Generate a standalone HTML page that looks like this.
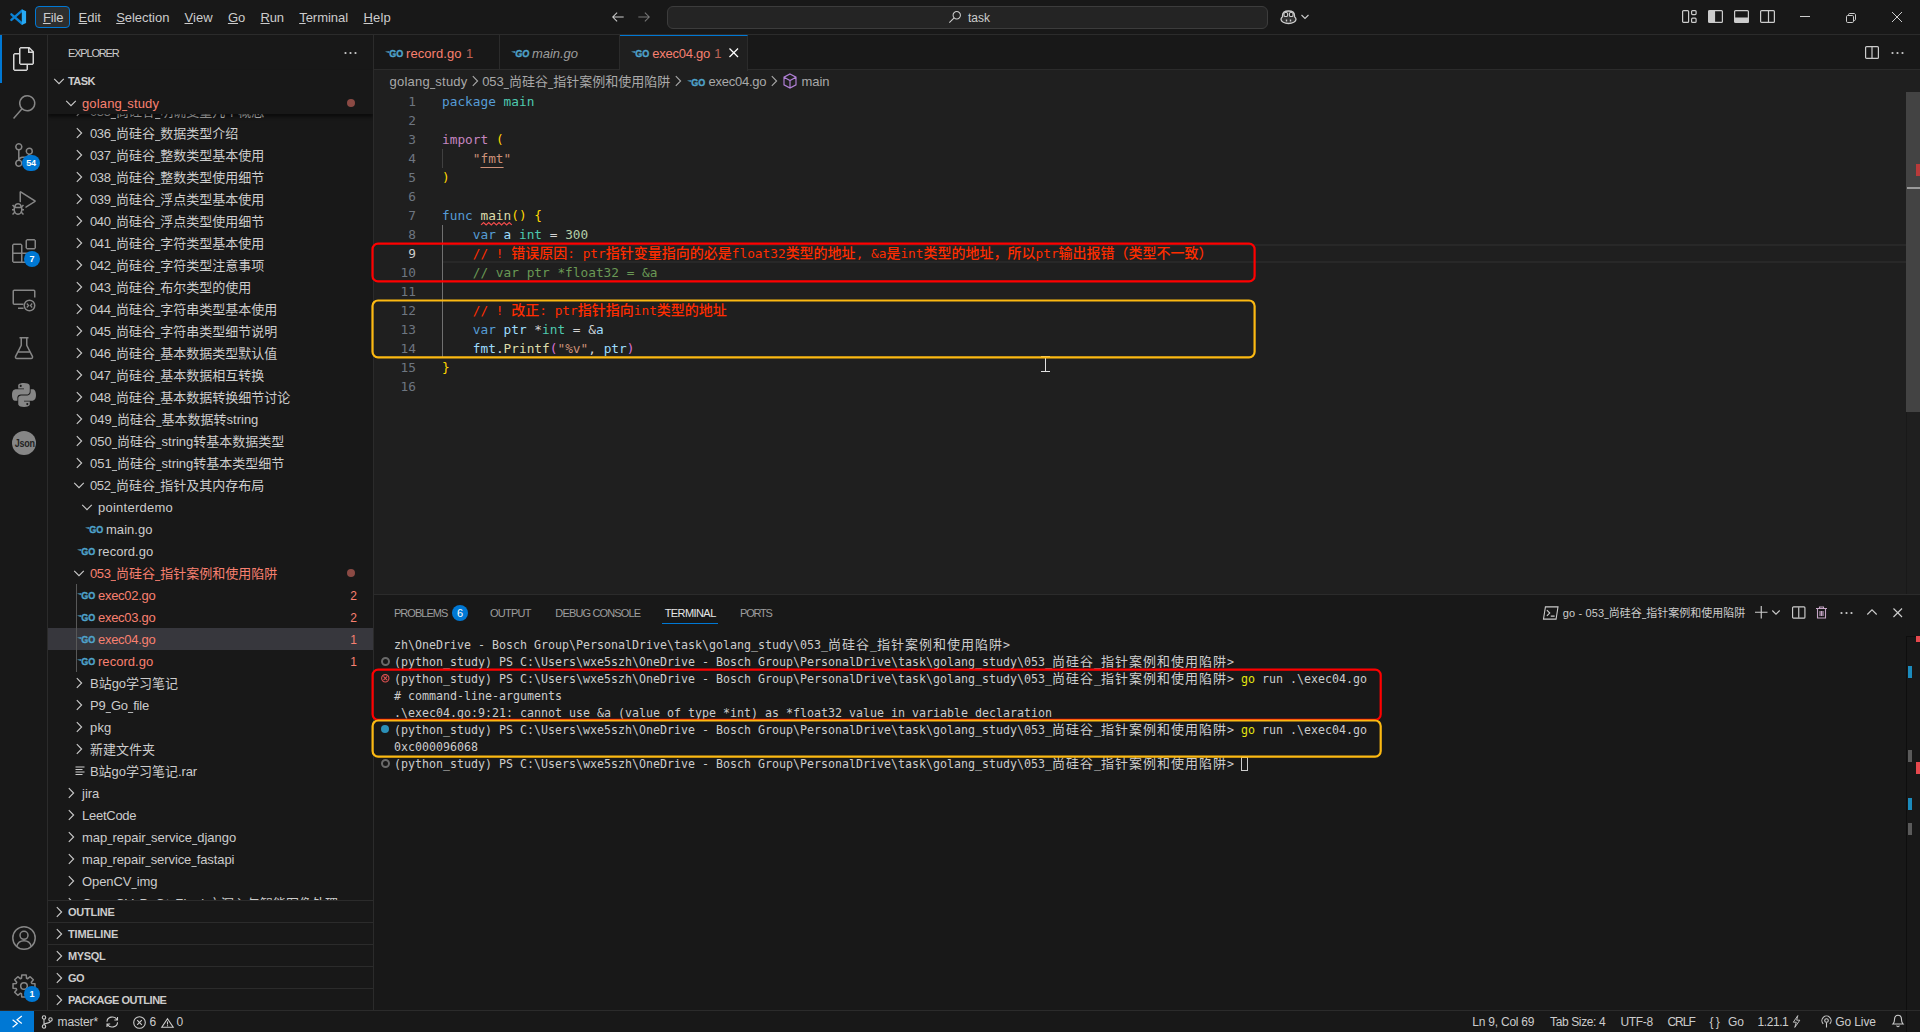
<!DOCTYPE html>
<html lang="zh"><head><meta charset="utf-8"><title>exec04.go - task - Visual Studio Code</title>
<style>
*{box-sizing:border-box;margin:0;padding:0}
html,body{width:1920px;height:1032px;overflow:hidden;background:#181818}
body{font-family:"Liberation Sans","Noto Sans CJK SC",sans-serif;font-size:13px;color:#ccc;position:relative}
.abs{position:absolute}
svg{display:block;overflow:visible;position:absolute}
.cj{font-family:"Noto Sans CJK SC",sans-serif;letter-spacing:0;line-height:0}
.u{display:inline-block;clip-path:inset(0 1.8px 0 0);margin-right:-1.8px;letter-spacing:0}
#title{position:absolute;left:0;top:0;width:1920px;height:35px;background:#181818;border-bottom:1px solid #2b2b2b}
.menu{position:absolute;top:1px;height:34px;line-height:34px;font-size:13px;color:#ccc;white-space:nowrap}
.menu u{text-decoration:underline;text-underline-offset:1px}
#filebtn{position:absolute;left:35px;top:6px;width:35px;height:22px;border:1px solid #0078d4;border-radius:4px;background:#2d2e2e}
#search{position:absolute;left:667px;top:6px;width:601px;height:23px;border:1px solid #3c3c3c;border-radius:6px;background:#242424}
#act{position:absolute;left:0;top:35px;width:48px;height:975px;background:#181818;border-right:1px solid #2b2b2b}
.badge{position:absolute;background:#0078d4;color:#fff;font-size:9px;font-weight:bold;border-radius:8px;height:16px;line-height:16px;text-align:center}
#side{position:absolute;left:48px;top:35px;width:326px;height:975px;background:#181818;border-right:1px solid #2b2b2b;overflow:hidden}
.row{position:absolute;left:0;width:325px;height:22px;line-height:22px;white-space:nowrap;font-size:13px;color:#ccc}
.t{position:absolute;top:0;white-space:nowrap}
.row .t{top:1px}
.row .n{position:absolute;right:16px;top:1px;font-size:12px;line-height:22px}
.red{color:#f88070}
.hdr{position:absolute;left:0;width:325px;height:22px;line-height:22px;font-size:11px;font-weight:bold;color:#ccc;border-top:1px solid #2b2b2b}
.hdr .t{left:20px;top:0}
#ed{position:absolute;left:374px;top:35px;width:1546px;height:559px;background:#1f1f1f}
#tabs{position:absolute;left:0;top:0;width:1546px;height:35px;background:#181818;border-bottom:1px solid #2b2b2b}
.tab{position:absolute;top:0;height:35px;line-height:37px;border-right:1px solid #2b2b2b;font-size:13px;white-space:nowrap}
#bc{position:absolute;left:0;top:35px;width:1546px;height:22px;line-height:24px;font-size:13px;color:#a9a9a9;white-space:nowrap}
.ln{position:absolute;left:0;width:42px;text-align:right;height:19px;line-height:19px;color:#6e7681}
.cl{position:absolute;left:68px;height:19px;line-height:19px;white-space:pre}
.code{font-family:"DejaVu Sans Mono","Liberation Mono","Noto Sans CJK SC",monospace;font-size:12.79px;color:#d4d4d4}
.code .cj{font-size:14px;font-weight:500}
.k{color:#569cd6}.ty{color:#4ec9b0}.s{color:#ce9178}.f{color:#dcdcaa}.v{color:#9cdcfe}.nm{color:#b5cea8}.c{color:#6a9955}.p{color:#c586c0}.b1{color:#ffd700}.b2{color:#da70d6}.al{color:#ff2d00}
#panel{position:absolute;left:374px;top:594px;width:1546px;height:416px;background:#181818;border-top:1px solid #2b2b2b}
.pt{position:absolute;top:7px;height:22px;line-height:22px;font-size:11px;color:#9d9d9d;white-space:nowrap}
.term{font-family:"DejaVu Sans Mono","Liberation Mono","Noto Sans CJK SC",monospace;font-size:11.645px;color:#ccc}
.tl{position:absolute;left:20px;height:17px;line-height:17px;white-space:pre}
.term .cj{font-size:13px;letter-spacing:1px}
.y{color:#e5e510}
#status{position:absolute;left:0;top:1010px;width:1920px;height:22px;background:#181818;border-top:1px solid #2b2b2b;font-size:12px;color:#ccc;line-height:23px;white-space:nowrap}
#remote{position:absolute;left:0;top:0;width:34px;height:21px;background:#0078d4}
.ann{position:absolute;border:2px solid #f00;border-radius:7px}
</style></head><body>
<div id="title">
<svg style="left:9.800px;top:8.800px" width="16.400" height="16.100" viewBox="0 0 16.4 16.1"><path d="M1.400 5.300 12 14.500M1.400 10.900 12 1.700" stroke="#0b82d4" stroke-width="2.350" stroke-linecap="round" fill="none"/><path d="M11.800.2 16.100 2.300v11.700l-4.300 2z" fill="#27a9f3"/></svg>
<div id="filebtn"></div>
<div class="menu" style="left:42.9px;letter-spacing:-0.14px"><u>F</u>ile</div>
<div class="menu" style="left:78.5px;letter-spacing:0.02px"><u>E</u>dit</div>
<div class="menu" style="left:116.2px;letter-spacing:-0.04px"><u>S</u>election</div>
<div class="menu" style="left:184.5px;letter-spacing:0.06px"><u>V</u>iew</div>
<div class="menu" style="left:227.9px;letter-spacing:0.03px"><u>G</u>o</div>
<div class="menu" style="left:260.5px;letter-spacing:-0.22px"><u>R</u>un</div>
<div class="menu" style="left:299.2px;letter-spacing:-0.04px"><u>T</u>erminal</div>
<div class="menu" style="left:363.5px;letter-spacing:0.19px"><u>H</u>elp</div>
<svg style="left:611.0px;top:10.0px" width="14.0" height="14.0" viewBox="0 0 16 16" fill="none" stroke="#ccc" stroke-width="1.2" ><path d="M7 3 2 8l5 5M2 8h12.5"/></svg>
<svg style="left:637.0px;top:10.0px" width="14.0" height="14.0" viewBox="0 0 16 16" fill="none" stroke="#777" stroke-width="1.2" ><path d="M9 3l5 5-5 5M14 8H1.5"/></svg>
<div id="search"></div>
<svg style="left:948.0px;top:10.0px" width="14.0" height="14.0" viewBox="0 0 16 16" fill="none" stroke="#ccc" stroke-width="1.2" ><circle cx="10" cy="6" r="4.2"/><path d="M7 9 1.5 14.5"/></svg>
<div class="menu" style="left:968px;font-size:12px">task</div>
<svg style="left:1280.0px;top:9.0px" width="17.0" height="16.0" viewBox="0 0 17 16" fill="none" stroke="#ccc" stroke-width="1.2" ><path d="M2.500 6.500C2.500 3.500 4.500 2 8.500 2s6 1.500 6 4.500v1.200c.9.600 1.500 1.600 1.500 2.600 0 2.400-3.300 4.200-7.500 4.200S1 12.700 1 10.300c0-1 .600-2 1.500-2.600z" stroke="#ccc" stroke-width="1.3" fill="#ccc" fill-opacity=".15"/><rect x="4" y="3.500" width="3.600" height="4" rx="1.300" fill="#181818" stroke="#ccc" stroke-width="1.100"/><rect x="9.400" y="3.500" width="3.600" height="4" rx="1.300" fill="#181818" stroke="#ccc" stroke-width="1.100"/><path d="M6.500 10.500v2M10.500 10.500v2" stroke-width="1.400"/></svg>
<svg style="left:1301.0px;top:13.0px" width="8.0" height="8.0" viewBox="0 0 8 8" fill="none" stroke="#ccc" stroke-width="1.1" ><path d="M.5 2 4 5.500 7.500 2"/></svg>
<svg style="left:1682.0px;top:10.2px" width="15.0" height="13.0" viewBox="0 0 15 13" fill="none" stroke="#ccc" stroke-width="1.2" ><rect x=".6" y=".6" width="6" height="11.800" rx="1"/><rect x="9.600" y=".6" width="4.500" height="4" rx="1"/><rect x="9.600" y="8.200" width="4.500" height="4.200" rx="1"/></svg>
<svg style="left:1708.0px;top:10.2px" width="15.0" height="13.0" viewBox="0 0 15 13" fill="none" stroke="#ccc" stroke-width="1.2" ><rect x=".6" y=".6" width="13.800" height="11.800" rx="1"/><path d="M1 1h5.500v11H1z" fill="#ccc"/></svg>
<svg style="left:1733.5px;top:10.2px" width="15.0" height="13.0" viewBox="0 0 15 13" fill="none" stroke="#ccc" stroke-width="1.2" ><rect x=".6" y=".6" width="13.800" height="11.800" rx="1"/><path d="M1 8h13v4H1z" fill="#ccc"/></svg>
<svg style="left:1759.5px;top:10.2px" width="15.0" height="13.0" viewBox="0 0 15 13" fill="none" stroke="#ccc" stroke-width="1.2" ><rect x=".6" y=".6" width="13.800" height="11.800" rx="1"/><path d="M8.500 1v11"/></svg>
<svg style="left:1800.0px;top:16.0px" width="10.0" height="1.0" viewBox="0 0 10 1" fill="none" stroke="#ccc" stroke-width="1" ><path d="M0 .5h10"/></svg>
<svg style="left:1846.0px;top:12.5px" width="10.0" height="10.0" viewBox="0 0 10 10" fill="none" stroke="#ccc" stroke-width="1" ><rect x=".5" y="2.500" width="7" height="7" rx="1.200"/><path d="M2.500 2.500V1.700C2.500 1 3 .5 3.700 .5H8c.9 0 1.500.6 1.500 1.500v4.300c0 .7-.5 1.200-1.200 1.200H7.500"/></svg>
<svg style="left:1892.0px;top:12.0px" width="10.0" height="10.0" viewBox="0 0 10 10" fill="none" stroke="#ccc" stroke-width="1" ><path d="M0 0l10 10M10 0 0 10"/></svg>
</div>
<div id="act"><div class="abs" style="left:0;top:0;width:2px;height:48px;background:#0078d4"></div>
<svg style="left:12px;top:12px" width="24" height="24" viewBox="0 0 24 24" fill="#d7d7d7" stroke="none"><path d="M17.500 0h-9L7 1.500V6H2.500L1 7.500v15.070L2.500 24h12.070L16 22.570V18h4.700l1.300-1.430V4.500L17.500 0zm0 2.120l2.380 2.380H17.500V2.120zm-3 20.380h-12v-15H7v9.070L8.500 18h6v4.500zm6-6h-12v-15H16V6h4.500v10.500z"/></svg>
<svg style="left:12px;top:60px" width="24" height="24" viewBox="0 0 24 24" fill="#868686" stroke="none"><path d="M15.250 0a8.250 8.250 0 0 0-6.180 13.720L1 22.880l1.120 1 8.050-9.120A8.251 8.251 0 1 0 15.250.01V0zm0 15a6.750 6.750 0 1 1 0-13.500 6.750 6.750 0 0 1 0 13.500z"/></svg>
<svg style="left:12px;top:108px" width="24" height="24" viewBox="0 0 24 24" fill="#868686" stroke="none"><path d="M21.007 8.222A3.738 3.738 0 0 0 15.045 5.200a3.737 3.737 0 0 0 1.156 6.583 2.988 2.988 0 0 1-2.668 1.670h-2.990a4.456 4.456 0 0 0-2.989 1.165V7.400a3.737 3.737 0 1 0-1.494 0v9.117a3.776 3.776 0 1 0 1.816.099 2.990 2.990 0 0 1 2.668-1.667h2.990a4.484 4.484 0 0 0 4.223-3.039 3.736 3.736 0 0 0 3.250-3.687zM4.565 3.738a2.242 2.242 0 1 1 4.484 0 2.242 2.242 0 0 1-4.484 0zm4.484 16.441a2.242 2.242 0 1 1-4.484 0 2.242 2.242 0 0 1 4.484 0zm8.221-9.715a2.242 2.242 0 1 1 0-4.485 2.242 2.242 0 0 1 0 4.485z"/></svg>
<svg style="left:12px;top:156px" width="24" height="24" viewBox="0 0 24 24" fill="#868686" stroke="none"><path d="M10.940 13.500l-1.320 1.320a3.730 3.730 0 0 0-7.240 0L1.060 13.500 0 14.560l1.720 1.720-.22.220V18H0v1.500h1.500v.080c.077.489.214.966.410 1.420L0 22.940 1.060 24l1.650-1.650A4.308 4.308 0 0 0 6 24a4.310 4.310 0 0 0 3.290-1.650L10.940 24 12 22.940 10.090 21c.198-.464.336-.951.410-1.450v-.100H12V18h-1.500v-1.500l-.22-.22L12 14.560l-1.060-1.060zM6 13.500a2.250 2.250 0 0 1 2.250 2.250h-4.500A2.250 2.250 0 0 1 6 13.500zm3 6a3.330 3.330 0 0 1-3 3 3.330 3.330 0 0 1-3-3v-2.250h6v2.250zm14.760-9.900v1.260L13.500 17.370V15.600l8.500-5.370L9 2v9.460a5.070 5.070 0 0 0-1.500-.720V.630L8.640 0l15.120 9.600z"/></svg>
<svg style="left:12px;top:204px" width="24" height="24" viewBox="0 0 24 24" fill="#868686" stroke="none"><path d="M13.500 1.500L15 0h7.500L24 1.500V9l-1.500 1.500H15L13.500 9V1.500zm1.500 0V9h7.500V1.500H15zM0 15V6l1.500-1.500H9L10.500 6v7.500H18l1.500 1.500v7.500L18 24H1.500L0 22.500V15zm9-1.500V6H1.500v7.500H9zM9 15H1.500v7.500H9V15zm1.500 7.500H18V15h-7.500v7.500z"/></svg>
<svg style="left:12px;top:253px" width="24" height="24" viewBox="0 0 24 24" fill="none" stroke="#868686" stroke-width="1.500"><path d="M11.500 16.250H2.250a1 1 0 0 1-1-1V3.250a1 1 0 0 1 1-1h19.500a1 1 0 0 1 1 1V9.500M6 20.250h5.500"/><circle cx="17.500" cy="17.500" r="5.250"/><path d="M14.800 15.500l1.800 2-1.800 2M20.200 15.500l-1.800 2 1.800 2" stroke-width="1.200"/></svg>
<svg style="left:12px;top:300.700px" width="24" height="24" viewBox="0 0 24 24" fill="none" stroke="#868686" stroke-width="1.500"><path d="M7.500 1.750h9M9.250 1.750v7.500L3.600 20.300a1.500 1.500 0 0 0 1.350 2.200h14.100a1.500 1.500 0 0 0 1.350-2.200L14.750 9.250v-7.500M6 16h12"/></svg>
<svg style="left:12px;top:348px" width="24" height="24" viewBox="0 0 24 24" fill="#868686" stroke="none"><path d="M11.900 0C5.800 0 6.200 2.650 6.200 2.650v2.750h5.800v.8H3.900S0 5.750 0 11.900s3.400 5.950 3.400 5.950h2v-2.850s-.1-3.400 3.350-3.400h5.750s3.250.050 3.250-3.150V3.200S18.250 0 11.900 0zM8.700 1.850a1.050 1.050 0 1 1 0 2.100 1.050 1.050 0 0 1 0-2.100z"/><path d="M12.100 24c6.100 0 5.700-2.650 5.700-2.650v-2.750H12v-.8h8.100s3.900.45 3.900-5.700-3.400-5.950-3.400-5.950h-2v2.850s.1 3.400-3.350 3.400H9.500s-3.250-.050-3.250 3.150v5.250S5.750 24 12.100 24zm3.200-1.850a1.050 1.050 0 1 1 0-2.100 1.050 1.050 0 0 1 0 2.100z"/></svg>
<div class="abs" style="left:12px;top:396px;width:24px;height:24px;border-radius:12px;background:#868686;color:#222;font-size:11.500px;font-weight:bold;line-height:24px;text-align:center;letter-spacing:-.3px"><span style="display:inline-block;transform:scaleX(.78)">Json</span></div>
<svg style="left:12px;top:891px" width="24" height="24" viewBox="0 0 24 24" fill="none" stroke="#868686" stroke-width="1.500"><circle cx="12" cy="12" r="11.200"/><circle cx="12" cy="9.300" r="4"/><path d="M4.800 20.300c.9-3.600 3.800-5.500 7.200-5.500s6.300 1.900 7.200 5.500"/></svg>
<svg style="left:12px;top:939px" width="24" height="24" viewBox="0 0 24 24" fill="none" stroke="#868686" stroke-width="1.500" stroke-linejoin="round"><path d="M9.47 4.20L9.76 1.03L14.24 1.03L14.53 4.20L15.72 4.69L18.18 2.66L21.34 5.82L19.31 8.28L19.80 9.47L22.97 9.76L22.97 14.24L19.80 14.53L19.31 15.72L21.34 18.18L18.18 21.34L15.72 19.31L14.53 19.80L14.24 22.97L9.76 22.97L9.47 19.80L8.28 19.31L5.82 21.34L2.66 18.18L4.69 15.72L4.20 14.53L1.03 14.24L1.03 9.76L4.20 9.47L4.69 8.28L2.66 5.82L5.82 2.66L8.28 4.69Z"/><circle cx="12" cy="12" r="3.300"/></svg>
<div class="badge" style="left:22px;top:120px;width:18px;letter-spacing:-.3px">54</div>
<div class="badge" style="left:24px;top:216px;width:16px">7</div>
<div class="badge" style="left:24px;top:951px;width:16px">1</div>
</div>
<div id="side">
<div class="abs" style="left:0;top:1px;height:35px;line-height:35px;font-size:11px;color:#ccc"><span class="t" style="left:20.0px;"><span style="letter-spacing:-1.18px">EXPLORER</span></span></div>
<svg style="left:296.3px;top:15.9px" width="13.0" height="4.0" viewBox="0 0 13 4" fill="#ccc" stroke="none" stroke-width="1.2" ><circle cx="1.500" cy="2" r="1.100"/><circle cx="6.500" cy="2" r="1.100"/><circle cx="11.500" cy="2" r="1.100"/></svg>
<div class="row " style="top:65px">
<svg style="left:23.0px;top:3.0px" width="16.0" height="16.0" viewBox="0 0 16 16" fill="none" stroke="#ccc" stroke-width="1.1" ><path d="M5.800 3.200 10.600 8 5.800 12.800"/></svg>
<span class="t" style="left:42.0px;"><span style="letter-spacing:-0.39px">035<span class="u" style="clip-path:inset(0 1.84px 0 0);margin-right:-1.84px">_</span></span><span class="cj">尚硅谷</span><span style="letter-spacing:-0.39px"><span class="u" style="clip-path:inset(0 1.84px 0 0);margin-right:-1.84px">_</span></span><span class="cj">明确变量几个概念</span></span>
</div>
<div class="row " style="top:87px">
<svg style="left:23.0px;top:3.0px" width="16.0" height="16.0" viewBox="0 0 16 16" fill="none" stroke="#ccc" stroke-width="1.1" ><path d="M5.800 3.200 10.600 8 5.800 12.800"/></svg>
<span class="t" style="left:42.0px;"><span style="letter-spacing:-0.39px">036<span class="u" style="clip-path:inset(0 1.84px 0 0);margin-right:-1.84px">_</span></span><span class="cj">尚硅谷</span><span style="letter-spacing:-0.39px"><span class="u" style="clip-path:inset(0 1.84px 0 0);margin-right:-1.84px">_</span></span><span class="cj">数据类型介绍</span></span>
</div>
<div class="row " style="top:109px">
<svg style="left:23.0px;top:3.0px" width="16.0" height="16.0" viewBox="0 0 16 16" fill="none" stroke="#ccc" stroke-width="1.1" ><path d="M5.800 3.200 10.600 8 5.800 12.800"/></svg>
<span class="t" style="left:42.0px;"><span style="letter-spacing:-0.39px">037<span class="u" style="clip-path:inset(0 1.84px 0 0);margin-right:-1.84px">_</span></span><span class="cj">尚硅谷</span><span style="letter-spacing:-0.39px"><span class="u" style="clip-path:inset(0 1.84px 0 0);margin-right:-1.84px">_</span></span><span class="cj">整数类型基本使用</span></span>
</div>
<div class="row " style="top:131px">
<svg style="left:23.0px;top:3.0px" width="16.0" height="16.0" viewBox="0 0 16 16" fill="none" stroke="#ccc" stroke-width="1.1" ><path d="M5.800 3.200 10.600 8 5.800 12.800"/></svg>
<span class="t" style="left:42.0px;"><span style="letter-spacing:-0.39px">038<span class="u" style="clip-path:inset(0 1.84px 0 0);margin-right:-1.84px">_</span></span><span class="cj">尚硅谷</span><span style="letter-spacing:-0.39px"><span class="u" style="clip-path:inset(0 1.84px 0 0);margin-right:-1.84px">_</span></span><span class="cj">整数类型使用细节</span></span>
</div>
<div class="row " style="top:153px">
<svg style="left:23.0px;top:3.0px" width="16.0" height="16.0" viewBox="0 0 16 16" fill="none" stroke="#ccc" stroke-width="1.1" ><path d="M5.800 3.200 10.600 8 5.800 12.800"/></svg>
<span class="t" style="left:42.0px;"><span style="letter-spacing:-0.39px">039<span class="u" style="clip-path:inset(0 1.84px 0 0);margin-right:-1.84px">_</span></span><span class="cj">尚硅谷</span><span style="letter-spacing:-0.39px"><span class="u" style="clip-path:inset(0 1.84px 0 0);margin-right:-1.84px">_</span></span><span class="cj">浮点类型基本使用</span></span>
</div>
<div class="row " style="top:175px">
<svg style="left:23.0px;top:3.0px" width="16.0" height="16.0" viewBox="0 0 16 16" fill="none" stroke="#ccc" stroke-width="1.1" ><path d="M5.800 3.200 10.600 8 5.800 12.800"/></svg>
<span class="t" style="left:42.0px;"><span style="letter-spacing:-0.39px">040<span class="u" style="clip-path:inset(0 1.84px 0 0);margin-right:-1.84px">_</span></span><span class="cj">尚硅谷</span><span style="letter-spacing:-0.39px"><span class="u" style="clip-path:inset(0 1.84px 0 0);margin-right:-1.84px">_</span></span><span class="cj">浮点类型使用细节</span></span>
</div>
<div class="row " style="top:197px">
<svg style="left:23.0px;top:3.0px" width="16.0" height="16.0" viewBox="0 0 16 16" fill="none" stroke="#ccc" stroke-width="1.1" ><path d="M5.800 3.200 10.600 8 5.800 12.800"/></svg>
<span class="t" style="left:42.0px;"><span style="letter-spacing:-0.39px">041<span class="u" style="clip-path:inset(0 1.84px 0 0);margin-right:-1.84px">_</span></span><span class="cj">尚硅谷</span><span style="letter-spacing:-0.39px"><span class="u" style="clip-path:inset(0 1.84px 0 0);margin-right:-1.84px">_</span></span><span class="cj">字符类型基本使用</span></span>
</div>
<div class="row " style="top:219px">
<svg style="left:23.0px;top:3.0px" width="16.0" height="16.0" viewBox="0 0 16 16" fill="none" stroke="#ccc" stroke-width="1.1" ><path d="M5.800 3.200 10.600 8 5.800 12.800"/></svg>
<span class="t" style="left:42.0px;"><span style="letter-spacing:-0.39px">042<span class="u" style="clip-path:inset(0 1.84px 0 0);margin-right:-1.84px">_</span></span><span class="cj">尚硅谷</span><span style="letter-spacing:-0.39px"><span class="u" style="clip-path:inset(0 1.84px 0 0);margin-right:-1.84px">_</span></span><span class="cj">字符类型注意事项</span></span>
</div>
<div class="row " style="top:241px">
<svg style="left:23.0px;top:3.0px" width="16.0" height="16.0" viewBox="0 0 16 16" fill="none" stroke="#ccc" stroke-width="1.1" ><path d="M5.800 3.200 10.600 8 5.800 12.800"/></svg>
<span class="t" style="left:42.0px;"><span style="letter-spacing:-0.39px">043<span class="u" style="clip-path:inset(0 1.84px 0 0);margin-right:-1.84px">_</span></span><span class="cj">尚硅谷</span><span style="letter-spacing:-0.39px"><span class="u" style="clip-path:inset(0 1.84px 0 0);margin-right:-1.84px">_</span></span><span class="cj">布尔类型的使用</span></span>
</div>
<div class="row " style="top:263px">
<svg style="left:23.0px;top:3.0px" width="16.0" height="16.0" viewBox="0 0 16 16" fill="none" stroke="#ccc" stroke-width="1.1" ><path d="M5.800 3.200 10.600 8 5.800 12.800"/></svg>
<span class="t" style="left:42.0px;"><span style="letter-spacing:-0.39px">044<span class="u" style="clip-path:inset(0 1.84px 0 0);margin-right:-1.84px">_</span></span><span class="cj">尚硅谷</span><span style="letter-spacing:-0.39px"><span class="u" style="clip-path:inset(0 1.84px 0 0);margin-right:-1.84px">_</span></span><span class="cj">字符串类型基本使用</span></span>
</div>
<div class="row " style="top:285px">
<svg style="left:23.0px;top:3.0px" width="16.0" height="16.0" viewBox="0 0 16 16" fill="none" stroke="#ccc" stroke-width="1.1" ><path d="M5.800 3.200 10.600 8 5.800 12.800"/></svg>
<span class="t" style="left:42.0px;"><span style="letter-spacing:-0.39px">045<span class="u" style="clip-path:inset(0 1.84px 0 0);margin-right:-1.84px">_</span></span><span class="cj">尚硅谷</span><span style="letter-spacing:-0.39px"><span class="u" style="clip-path:inset(0 1.84px 0 0);margin-right:-1.84px">_</span></span><span class="cj">字符串类型细节说明</span></span>
</div>
<div class="row " style="top:307px">
<svg style="left:23.0px;top:3.0px" width="16.0" height="16.0" viewBox="0 0 16 16" fill="none" stroke="#ccc" stroke-width="1.1" ><path d="M5.800 3.200 10.600 8 5.800 12.800"/></svg>
<span class="t" style="left:42.0px;"><span style="letter-spacing:-0.39px">046<span class="u" style="clip-path:inset(0 1.84px 0 0);margin-right:-1.84px">_</span></span><span class="cj">尚硅谷</span><span style="letter-spacing:-0.39px"><span class="u" style="clip-path:inset(0 1.84px 0 0);margin-right:-1.84px">_</span></span><span class="cj">基本数据类型默认值</span></span>
</div>
<div class="row " style="top:329px">
<svg style="left:23.0px;top:3.0px" width="16.0" height="16.0" viewBox="0 0 16 16" fill="none" stroke="#ccc" stroke-width="1.1" ><path d="M5.800 3.200 10.600 8 5.800 12.800"/></svg>
<span class="t" style="left:42.0px;"><span style="letter-spacing:-0.39px">047<span class="u" style="clip-path:inset(0 1.84px 0 0);margin-right:-1.84px">_</span></span><span class="cj">尚硅谷</span><span style="letter-spacing:-0.39px"><span class="u" style="clip-path:inset(0 1.84px 0 0);margin-right:-1.84px">_</span></span><span class="cj">基本数据相互转换</span></span>
</div>
<div class="row " style="top:351px">
<svg style="left:23.0px;top:3.0px" width="16.0" height="16.0" viewBox="0 0 16 16" fill="none" stroke="#ccc" stroke-width="1.1" ><path d="M5.800 3.200 10.600 8 5.800 12.800"/></svg>
<span class="t" style="left:42.0px;"><span style="letter-spacing:-0.39px">048<span class="u" style="clip-path:inset(0 1.84px 0 0);margin-right:-1.84px">_</span></span><span class="cj">尚硅谷</span><span style="letter-spacing:-0.39px"><span class="u" style="clip-path:inset(0 1.84px 0 0);margin-right:-1.84px">_</span></span><span class="cj">基本数据转换细节讨论</span></span>
</div>
<div class="row " style="top:373px">
<svg style="left:23.0px;top:3.0px" width="16.0" height="16.0" viewBox="0 0 16 16" fill="none" stroke="#ccc" stroke-width="1.1" ><path d="M5.800 3.200 10.600 8 5.800 12.800"/></svg>
<span class="t" style="left:42.0px;">049<span class="u" style="clip-path:inset(0 1.84px 0 0);margin-right:-1.84px">_</span><span class="cj">尚硅谷</span><span class="u" style="clip-path:inset(0 1.84px 0 0);margin-right:-1.84px">_</span><span class="cj">基本数据转</span>string</span>
</div>
<div class="row " style="top:395px">
<svg style="left:23.0px;top:3.0px" width="16.0" height="16.0" viewBox="0 0 16 16" fill="none" stroke="#ccc" stroke-width="1.1" ><path d="M5.800 3.200 10.600 8 5.800 12.800"/></svg>
<span class="t" style="left:42.0px;">050<span class="u" style="clip-path:inset(0 1.84px 0 0);margin-right:-1.84px">_</span><span class="cj">尚硅谷</span><span class="u" style="clip-path:inset(0 1.84px 0 0);margin-right:-1.84px">_</span>string<span class="cj">转基本数据类型</span></span>
</div>
<div class="row " style="top:417px">
<svg style="left:23.0px;top:3.0px" width="16.0" height="16.0" viewBox="0 0 16 16" fill="none" stroke="#ccc" stroke-width="1.1" ><path d="M5.800 3.200 10.600 8 5.800 12.800"/></svg>
<span class="t" style="left:42.0px;">051<span class="u" style="clip-path:inset(0 1.84px 0 0);margin-right:-1.84px">_</span><span class="cj">尚硅谷</span><span class="u" style="clip-path:inset(0 1.84px 0 0);margin-right:-1.84px">_</span>string<span class="cj">转基本类型细节</span></span>
</div>
<div class="row " style="top:439px">
<svg style="left:23.0px;top:3.0px" width="16.0" height="16.0" viewBox="0 0 16 16" fill="none" stroke="#ccc" stroke-width="1.1" ><path d="M3.200 5.800 8 10.600 12.800 5.800"/></svg>
<span class="t" style="left:42.0px;"><span style="letter-spacing:-0.39px">052<span class="u" style="clip-path:inset(0 1.84px 0 0);margin-right:-1.84px">_</span></span><span class="cj">尚硅谷</span><span style="letter-spacing:-0.39px"><span class="u" style="clip-path:inset(0 1.84px 0 0);margin-right:-1.84px">_</span></span><span class="cj">指针及其内存布局</span></span>
</div>
<div class="row " style="top:461px">
<svg style="left:31.0px;top:3.0px" width="16.0" height="16.0" viewBox="0 0 16 16" fill="none" stroke="#ccc" stroke-width="1.1" ><path d="M3.200 5.800 8 10.600 12.800 5.800"/></svg>
<span class="t" style="left:50.0px;"><span style="letter-spacing:0.25px">pointerdemo</span></span>
</div>
<div class="row " style="top:483px">
<svg style="left:37.0px;top:6.0px" width="18" height="10" viewBox="0 0 18 10"><path d="M0 3.500 4.400 3.100V5.200L2 4.500z" fill="#4f9fc4" opacity=".85"/><text transform="translate(4.200 8.600) scale(.25)" font-family="Liberation Sans,sans-serif" font-weight="bold" font-size="40" text-rendering="geometricPrecision" fill="#4fa3cb" stroke="#4fa3cb" stroke-width="1.600" textLength="56" lengthAdjust="spacingAndGlyphs">GO</text></svg>
<span class="t" style="left:58.0px;"><span style="letter-spacing:0.04px">main.go</span></span>
</div>
<div class="row " style="top:505px">
<svg style="left:29.0px;top:6.0px" width="18" height="10" viewBox="0 0 18 10"><path d="M0 3.500 4.400 3.100V5.200L2 4.500z" fill="#4f9fc4" opacity=".85"/><text transform="translate(4.200 8.600) scale(.25)" font-family="Liberation Sans,sans-serif" font-weight="bold" font-size="40" text-rendering="geometricPrecision" fill="#4fa3cb" stroke="#4fa3cb" stroke-width="1.600" textLength="56" lengthAdjust="spacingAndGlyphs">GO</text></svg>
<span class="t" style="left:50.0px;"><span style="letter-spacing:0.04px">record.go</span></span>
</div>
<div class="row red" style="top:527px">
<svg style="left:23.0px;top:3.0px" width="16.0" height="16.0" viewBox="0 0 16 16" fill="none" stroke="#ccc" stroke-width="1.1" ><path d="M3.200 5.800 8 10.600 12.800 5.800"/></svg>
<span class="t" style="left:42.0px;"><span style="letter-spacing:-0.39px">053<span class="u" style="clip-path:inset(0 1.84px 0 0);margin-right:-1.84px">_</span></span><span class="cj">尚硅谷</span><span style="letter-spacing:-0.39px"><span class="u" style="clip-path:inset(0 1.84px 0 0);margin-right:-1.84px">_</span></span><span class="cj">指针案例和使用陷阱</span></span>
<span class="abs" style="left:299px;top:7px;width:8px;height:8px;border-radius:4px;background:#8b4a44"></span>
</div>
<div class="row red" style="top:549px">
<svg style="left:29.0px;top:6.0px" width="18" height="10" viewBox="0 0 18 10"><path d="M0 3.500 4.400 3.100V5.200L2 4.500z" fill="#4f9fc4" opacity=".85"/><text transform="translate(4.200 8.600) scale(.25)" font-family="Liberation Sans,sans-serif" font-weight="bold" font-size="40" text-rendering="geometricPrecision" fill="#4fa3cb" stroke="#4fa3cb" stroke-width="1.600" textLength="56" lengthAdjust="spacingAndGlyphs">GO</text></svg>
<span class="t" style="left:50.0px;"><span style="letter-spacing:-0.28px">exec02.go</span></span>
<span class="n">2</span>
</div>
<div class="row red" style="top:571px">
<svg style="left:29.0px;top:6.0px" width="18" height="10" viewBox="0 0 18 10"><path d="M0 3.500 4.400 3.100V5.200L2 4.500z" fill="#4f9fc4" opacity=".85"/><text transform="translate(4.200 8.600) scale(.25)" font-family="Liberation Sans,sans-serif" font-weight="bold" font-size="40" text-rendering="geometricPrecision" fill="#4fa3cb" stroke="#4fa3cb" stroke-width="1.600" textLength="56" lengthAdjust="spacingAndGlyphs">GO</text></svg>
<span class="t" style="left:50.0px;"><span style="letter-spacing:-0.28px">exec03.go</span></span>
<span class="n">2</span>
</div>
<div class="row red" style="top:593px;background:#37373d">
<svg style="left:29.0px;top:6.0px" width="18" height="10" viewBox="0 0 18 10"><path d="M0 3.500 4.400 3.100V5.200L2 4.500z" fill="#4f9fc4" opacity=".85"/><text transform="translate(4.200 8.600) scale(.25)" font-family="Liberation Sans,sans-serif" font-weight="bold" font-size="40" text-rendering="geometricPrecision" fill="#4fa3cb" stroke="#4fa3cb" stroke-width="1.600" textLength="56" lengthAdjust="spacingAndGlyphs">GO</text></svg>
<span class="t" style="left:50.0px;"><span style="letter-spacing:-0.28px">exec04.go</span></span>
<span class="n">1</span>
</div>
<div class="row red" style="top:615px">
<svg style="left:29.0px;top:6.0px" width="18" height="10" viewBox="0 0 18 10"><path d="M0 3.500 4.400 3.100V5.200L2 4.500z" fill="#4f9fc4" opacity=".85"/><text transform="translate(4.200 8.600) scale(.25)" font-family="Liberation Sans,sans-serif" font-weight="bold" font-size="40" text-rendering="geometricPrecision" fill="#4fa3cb" stroke="#4fa3cb" stroke-width="1.600" textLength="56" lengthAdjust="spacingAndGlyphs">GO</text></svg>
<span class="t" style="left:50.0px;"><span style="letter-spacing:0.04px">record.go</span></span>
<span class="n">1</span>
</div>
<div class="row " style="top:637px">
<svg style="left:23.0px;top:3.0px" width="16.0" height="16.0" viewBox="0 0 16 16" fill="none" stroke="#ccc" stroke-width="1.1" ><path d="M5.800 3.200 10.600 8 5.800 12.800"/></svg>
<span class="t" style="left:42.0px;"><span style="letter-spacing:-0.04px">B</span><span class="cj">站</span><span style="letter-spacing:-0.04px">go</span><span class="cj">学习笔记</span></span>
</div>
<div class="row " style="top:659px">
<svg style="left:23.0px;top:3.0px" width="16.0" height="16.0" viewBox="0 0 16 16" fill="none" stroke="#ccc" stroke-width="1.1" ><path d="M5.800 3.200 10.600 8 5.800 12.800"/></svg>
<span class="t" style="left:42.0px;"><span style="letter-spacing:-0.21px">P9<span class="u" style="clip-path:inset(0 1.84px 0 0);margin-right:-1.84px">_</span>Go<span class="u" style="clip-path:inset(0 1.84px 0 0);margin-right:-1.84px">_</span>file</span></span>
</div>
<div class="row " style="top:681px">
<svg style="left:23.0px;top:3.0px" width="16.0" height="16.0" viewBox="0 0 16 16" fill="none" stroke="#ccc" stroke-width="1.1" ><path d="M5.800 3.200 10.600 8 5.800 12.800"/></svg>
<span class="t" style="left:42.0px;"><span style="letter-spacing:0.18px">pkg</span></span>
</div>
<div class="row " style="top:703px">
<svg style="left:23.0px;top:3.0px" width="16.0" height="16.0" viewBox="0 0 16 16" fill="none" stroke="#ccc" stroke-width="1.1" ><path d="M5.800 3.200 10.600 8 5.800 12.800"/></svg>
<span class="t" style="left:42.0px;"><span class="cj">新建文件夹</span></span>
</div>
<div class="row " style="top:725px">
<svg style="left:27.0px;top:5.0px" width="12.0" height="12.0" viewBox="0 0 12 12" fill="none" stroke="#ccc" stroke-width="1.1" ><path d="M.5 2h9M.5 4.500h7M.5 7h9M.5 9.500h7"/></svg>
<span class="t" style="left:42.0px;"><span style="letter-spacing:-0.09px">B</span><span class="cj">站</span><span style="letter-spacing:-0.09px">go</span><span class="cj">学习笔记</span><span style="letter-spacing:-0.09px">.rar</span></span>
</div>
<div class="row " style="top:747px">
<svg style="left:15.0px;top:3.0px" width="16.0" height="16.0" viewBox="0 0 16 16" fill="none" stroke="#ccc" stroke-width="1.1" ><path d="M5.800 3.200 10.600 8 5.800 12.800"/></svg>
<span class="t" style="left:34.0px;"><span style="letter-spacing:-0.01px">jira</span></span>
</div>
<div class="row " style="top:769px">
<svg style="left:15.0px;top:3.0px" width="16.0" height="16.0" viewBox="0 0 16 16" fill="none" stroke="#ccc" stroke-width="1.1" ><path d="M5.800 3.200 10.600 8 5.800 12.800"/></svg>
<span class="t" style="left:34.0px;"><span style="letter-spacing:-0.26px">LeetCode</span></span>
</div>
<div class="row " style="top:791px">
<svg style="left:15.0px;top:3.0px" width="16.0" height="16.0" viewBox="0 0 16 16" fill="none" stroke="#ccc" stroke-width="1.1" ><path d="M5.800 3.200 10.600 8 5.800 12.800"/></svg>
<span class="t" style="left:34.0px;"><span style="letter-spacing:-0.04px">map<span class="u" style="clip-path:inset(0 1.84px 0 0);margin-right:-1.84px">_</span>repair<span class="u" style="clip-path:inset(0 1.84px 0 0);margin-right:-1.84px">_</span>service<span class="u" style="clip-path:inset(0 1.84px 0 0);margin-right:-1.84px">_</span>django</span></span>
</div>
<div class="row " style="top:813px">
<svg style="left:15.0px;top:3.0px" width="16.0" height="16.0" viewBox="0 0 16 16" fill="none" stroke="#ccc" stroke-width="1.1" ><path d="M5.800 3.200 10.600 8 5.800 12.800"/></svg>
<span class="t" style="left:34.0px;"><span style="letter-spacing:-0.08px">map<span class="u" style="clip-path:inset(0 1.84px 0 0);margin-right:-1.84px">_</span>repair<span class="u" style="clip-path:inset(0 1.84px 0 0);margin-right:-1.84px">_</span>service<span class="u" style="clip-path:inset(0 1.84px 0 0);margin-right:-1.84px">_</span>fastapi</span></span>
</div>
<div class="row " style="top:835px">
<svg style="left:15.0px;top:3.0px" width="16.0" height="16.0" viewBox="0 0 16 16" fill="none" stroke="#ccc" stroke-width="1.1" ><path d="M5.800 3.200 10.600 8 5.800 12.800"/></svg>
<span class="t" style="left:34.0px;"><span style="letter-spacing:-0.10px">OpenCV<span class="u" style="clip-path:inset(0 1.84px 0 0);margin-right:-1.84px">_</span>img</span></span>
</div>
<div class="row " style="top:857px">
<svg style="left:15.0px;top:3.0px" width="16.0" height="16.0" viewBox="0 0 16 16" fill="none" stroke="#ccc" stroke-width="1.1" ><path d="M5.800 3.200 10.600 8 5.800 12.800"/></svg>
<span class="t" style="left:34.0px;"><span style="letter-spacing:0.36px">OpenCV<span class="u" style="clip-path:inset(0 1.84px 0 0);margin-right:-1.84px">_</span>PyQt<span class="u" style="clip-path:inset(0 1.84px 0 0);margin-right:-1.84px">_</span>Flask</span><span class="cj">之深入与智能图像处理</span></span>
</div>
<div class="abs" style="left:28px;top:549px;width:1px;height:88px;background:#585858"></div>
<div class="abs" style="left:0;top:35px;width:325px;height:44px;background:#181818;box-shadow:0 3px 3px rgba(0,0,0,.5)"></div>
<div class="row" style="top:34px;font-size:11px;font-weight:bold"><svg style="left:3.0px;top:4.0px" width="16.0" height="16.0" viewBox="0 0 16 16" fill="none" stroke="#ccc" stroke-width="1.1" ><path d="M3.200 5.800 8 10.600 12.800 5.800"/></svg><span class="t" style="left:20.0px;"><span style="letter-spacing:-0.53px">TASK</span></span></div>
<div class="row red" style="top:57px"><svg style="left:15.0px;top:3.0px" width="16.0" height="16.0" viewBox="0 0 16 16" fill="none" stroke="#ccc" stroke-width="1.1" ><path d="M3.200 5.800 8 10.600 12.800 5.800"/></svg><span class="t" style="left:34.0px;"><span style="letter-spacing:0.14px">golang<span class="u" style="clip-path:inset(0 1.84px 0 0);margin-right:-1.84px">_</span>study</span></span><span class="abs" style="left:299px;top:7px;width:8px;height:8px;border-radius:4px;background:#8b4a44"></span></div>
<div class="abs" style="left:0;top:865px;width:325px;height:110px;background:#181818"></div>
<div class="hdr" style="top:865px"><svg style="left:3.0px;top:2.6px" width="16.0" height="16.0" viewBox="0 0 16 16" fill="none" stroke="#ccc" stroke-width="1.1" ><path d="M5.800 3.200 10.600 8 5.800 12.800"/></svg><span class="t" style="left:20.0px;"><span style="letter-spacing:-0.25px">OUTLINE</span></span></div>
<div class="hdr" style="top:887px"><svg style="left:3.0px;top:2.6px" width="16.0" height="16.0" viewBox="0 0 16 16" fill="none" stroke="#ccc" stroke-width="1.1" ><path d="M5.800 3.200 10.600 8 5.800 12.800"/></svg><span class="t" style="left:20.0px;"><span style="letter-spacing:-0.13px">TIMELINE</span></span></div>
<div class="hdr" style="top:909px"><svg style="left:3.0px;top:2.6px" width="16.0" height="16.0" viewBox="0 0 16 16" fill="none" stroke="#ccc" stroke-width="1.1" ><path d="M5.800 3.200 10.600 8 5.800 12.800"/></svg><span class="t" style="left:20.0px;"><span style="letter-spacing:-0.36px">MYSQL</span></span></div>
<div class="hdr" style="top:931px"><svg style="left:3.0px;top:2.6px" width="16.0" height="16.0" viewBox="0 0 16 16" fill="none" stroke="#ccc" stroke-width="1.1" ><path d="M5.800 3.200 10.600 8 5.800 12.800"/></svg><span class="t" style="left:20.0px;"><span style="letter-spacing:-0.56px">GO</span></span></div>
<div class="hdr" style="top:953px"><svg style="left:3.0px;top:2.6px" width="16.0" height="16.0" viewBox="0 0 16 16" fill="none" stroke="#ccc" stroke-width="1.1" ><path d="M5.800 3.200 10.600 8 5.800 12.800"/></svg><span class="t" style="left:20.0px;"><span style="letter-spacing:-0.47px">PACKAGE OUTLINE</span></span></div>
</div>
<div id="ed">
<div id="tabs">
<div class="tab red" style="left:0;width:126px"><svg style="left:10.5px;top:12.7px" width="18" height="10" viewBox="0 0 18 10"><path d="M0 3.500 4.400 3.100V5.200L2 4.500z" fill="#4f9fc4" opacity=".85"/><text transform="translate(4.200 8.600) scale(.25)" font-family="Liberation Sans,sans-serif" font-weight="bold" font-size="40" text-rendering="geometricPrecision" fill="#4fa3cb" stroke="#4fa3cb" stroke-width="1.600" textLength="56" lengthAdjust="spacingAndGlyphs">GO</text></svg><span class="t" style="left:32.0px;"><span style="letter-spacing:0.06px">record.go</span></span><span class="t" style="left:92.0px;opacity:.72">1</span></div>
<div class="tab" style="left:126px;width:120px;color:#9d9d9d;font-style:italic"><svg style="left:10.5px;top:12.7px" width="18" height="10" viewBox="0 0 18 10"><path d="M0 3.500 4.400 3.100V5.200L2 4.500z" fill="#4f9fc4" opacity=".85"/><text transform="translate(4.200 8.600) scale(.25)" font-family="Liberation Sans,sans-serif" font-weight="bold" font-size="40" text-rendering="geometricPrecision" fill="#4fa3cb" stroke="#4fa3cb" stroke-width="1.600" textLength="56" lengthAdjust="spacingAndGlyphs">GO</text></svg><span class="t" style="left:32.0px;"><span style="letter-spacing:-0.04px">main.go</span></span></div>
<div class="tab red" style="left:246px;width:128px;background:#1f1f1f;height:36px;border-top:1px solid #0078d4;line-height:35px"><svg style="left:10.5px;top:11.7px" width="18" height="10" viewBox="0 0 18 10"><path d="M0 3.500 4.400 3.100V5.200L2 4.500z" fill="#4f9fc4" opacity=".85"/><text transform="translate(4.200 8.600) scale(.25)" font-family="Liberation Sans,sans-serif" font-weight="bold" font-size="40" text-rendering="geometricPrecision" fill="#4fa3cb" stroke="#4fa3cb" stroke-width="1.600" textLength="56" lengthAdjust="spacingAndGlyphs">GO</text></svg><span class="t" style="left:32.2px;"><span style="letter-spacing:-0.24px">exec04.go</span></span><span class="t" style="left:94.2px;opacity:.72">1</span><svg style="left:109.0px;top:12.0px" width="9.5" height="9.5" viewBox="0 0 10 10" fill="none" stroke="#fff" stroke-width="1.3" ><path d="M.5.5l9 9M9.500.5l-9 9"/></svg></div>
<svg style="left:1490.5px;top:11.0px" width="14.0" height="13.0" viewBox="0 0 14 13" fill="none" stroke="#ccc" stroke-width="1.2" ><rect x=".6" y=".6" width="12.800" height="11.800" rx="1"/><path d="M7 1v11"/></svg>
<svg style="left:1516.5px;top:16.0px" width="13.0" height="4.0" viewBox="0 0 13 4" fill="#ccc" stroke="none" stroke-width="1.2" ><circle cx="1.500" cy="2" r="1.100"/><circle cx="6.500" cy="2" r="1.100"/><circle cx="11.500" cy="2" r="1.100"/></svg>
</div>
<div id="bc"><span class="t" style="left:15.5px;"><span style="letter-spacing:0.23px">golang<span class="u" style="clip-path:inset(0 1.84px 0 0);margin-right:-1.84px">_</span>study</span></span><svg style="left:92.5px;top:3.0px" width="16.0" height="16.0" viewBox="0 0 16 16" fill="none" stroke="#a9a9a9" stroke-width="1.1" ><path d="M5.800 3.200 10.600 8 5.800 12.800"/></svg><span class="t" style="left:108.2px;"><span style="letter-spacing:-0.13px">053<span class="u" style="clip-path:inset(0 1.84px 0 0);margin-right:-1.84px">_</span></span><span class="cj">尚硅谷</span><span style="letter-spacing:-0.13px"><span class="u" style="clip-path:inset(0 1.84px 0 0);margin-right:-1.84px">_</span></span><span class="cj">指针案例和使用陷阱</span></span><svg style="left:296.0px;top:3.0px" width="16.0" height="16.0" viewBox="0 0 16 16" fill="none" stroke="#a9a9a9" stroke-width="1.1" ><path d="M5.800 3.200 10.600 8 5.800 12.800"/></svg><svg style="left:313.0px;top:7.0px" width="18" height="10" viewBox="0 0 18 10"><path d="M0 3.500 4.400 3.100V5.200L2 4.500z" fill="#4f9fc4" opacity=".85"/><text transform="translate(4.200 8.600) scale(.25)" font-family="Liberation Sans,sans-serif" font-weight="bold" font-size="40" text-rendering="geometricPrecision" fill="#4fa3cb" stroke="#4fa3cb" stroke-width="1.600" textLength="56" lengthAdjust="spacingAndGlyphs">GO</text></svg><span class="t" style="left:334.5px;"><span style="letter-spacing:-0.24px">exec04.go</span></span><svg style="left:392.0px;top:3.0px" width="16.0" height="16.0" viewBox="0 0 16 16" fill="none" stroke="#a9a9a9" stroke-width="1.1" ><path d="M5.800 3.200 10.600 8 5.800 12.800"/></svg>
<svg style="left:409.3px;top:2.8px" width="14.0" height="16.0" viewBox="0 0 14 16" fill="none" stroke="#b180d7" stroke-width="1.15" ><path d="M7 1 13 4.200v7.600L7 15 1 11.800V4.200zM1 4.200 7 7.600l6-3.400M7 7.600V15"/></svg>
<span class="t" style="left:427.5px;"><span style="letter-spacing:-0.04px">main</span></span></div>
<div class="code abs" style="left:0;top:57px;width:1546px;height:502px">
<div class="abs" style="left:68px;top:152px;width:1464px;height:19px;border-top:2px solid #282828;border-bottom:2px solid #282828"></div>
<div class="abs" style="left:68px;top:57px;width:1px;height:19px;background:#404040"></div>
<div class="abs" style="left:68px;top:133px;width:1px;height:133px;background:#707070"></div>
<svg style="left:106.5px;top:130.0px" width="31.0" height="3.4" viewBox="0 0 31 3.4" fill="none" stroke="#f14c4c" stroke-width="1.25" ><path d="M0 2.900l2.570-2.400l2.570 2.400l2.570-2.400l2.570 2.400l2.570-2.400l2.570 2.400l2.570-2.400l2.570 2.400l2.570-2.400l2.570 2.400l2.570-2.400l2.570 2.400"/></svg>
<div class="ln" style="top:0px">1</div><div class="cl" style="top:0px"><span class="k">package</span> <span class="ty">main</span></div>
<div class="ln" style="top:19px">2</div><div class="cl" style="top:19px"></div>
<div class="ln" style="top:38px">3</div><div class="cl" style="top:38px"><span class="p">import</span> <span class="b1">(</span></div>
<div class="ln" style="top:57px">4</div><div class="cl" style="top:57px">    <span class="s">"<span style="text-decoration:underline;text-underline-offset:3.700px">fmt</span>"</span></div>
<div class="ln" style="top:76px">5</div><div class="cl" style="top:76px"><span class="b1">)</span></div>
<div class="ln" style="top:95px">6</div><div class="cl" style="top:95px"></div>
<div class="ln" style="top:114px">7</div><div class="cl" style="top:114px"><span class="k">func</span> <span class="f">main</span><span class="b1">()</span> <span class="b1">{</span></div>
<div class="ln" style="top:133px">8</div><div class="cl" style="top:133px">    <span class="k">var</span> <span class="v">a</span> <span class="ty">int</span> = <span class="nm">300</span></div>
<div class="ln" style="top:152px;color:#ccc">9</div><div class="cl" style="top:152px">    <span class="al">// ! <span class="cj">错误原因</span>: ptr<span class="cj">指针变量指向的必是</span>float32<span class="cj">类型的地址</span>, &amp;a<span class="cj">是</span>int<span class="cj">类型的地址，所以</span>ptr<span class="cj">输出报错（类型不一致）</span></span></div>
<div class="ln" style="top:171px">10</div><div class="cl" style="top:171px">    <span class="c">// var ptr *float32 = &amp;a</span></div>
<div class="ln" style="top:190px">11</div><div class="cl" style="top:190px"></div>
<div class="ln" style="top:209px">12</div><div class="cl" style="top:209px">    <span class="al">// ! <span class="cj">改正</span>: ptr<span class="cj">指针指向</span>int<span class="cj">类型的地址</span></span></div>
<div class="ln" style="top:228px">13</div><div class="cl" style="top:228px">    <span class="k">var</span> <span class="v">ptr</span> *<span class="ty">int</span> = &amp;<span class="v">a</span></div>
<div class="ln" style="top:247px">14</div><div class="cl" style="top:247px">    <span class="v">fmt</span>.<span class="f">Printf</span><span class="b2">(</span><span class="s">"%v"</span>, <span class="v">ptr</span><span class="b2">)</span></div>
<div class="ln" style="top:266px">15</div><div class="cl" style="top:266px"><span class="b1">}</span></div>
<div class="ln" style="top:285px">16</div><div class="cl" style="top:285px"></div>
</div>
<div class="abs" style="left:1532px;top:57px;width:14px;height:320px;background:#434343"></div>
<div class="abs" style="left:1532px;top:377px;width:1px;height:182px;background:#191919"></div>
<div class="abs" style="left:1542px;top:129px;width:4px;height:12px;background:#b93a3a"></div>
<div class="abs" style="left:1533px;top:152px;width:13px;height:2px;background:#9a9a9a"></div>
<svg style="left:667.0px;top:321.0px" width="9.0" height="16.0" viewBox="0 0 9 16" fill="none" stroke="#e0e0e0" stroke-width="1" ><path d="M0 .5h9M0 15.500h9M4.500 0v16"/></svg>
</div>
<div id="panel">
<div class="pt" style="left:0;"><span class="t" style="left:20.0px;"><span style="letter-spacing:-0.98px">PROBLEMS</span></span></div>
<div class="pt" style="left:0;"><span class="t" style="left:116.0px;"><span style="letter-spacing:-0.75px">OUTPUT</span></span></div>
<div class="pt" style="left:0;"><span class="t" style="left:181.3px;"><span style="letter-spacing:-0.84px">DEBUG CONSOLE</span></span></div>
<div class="pt" style="left:0;color:#e7e7e7"><span class="t" style="left:290.7px;"><span style="letter-spacing:-0.58px">TERMINAL</span></span></div>
<div class="pt" style="left:0;"><span class="t" style="left:366.0px;"><span style="letter-spacing:-1.20px">PORTS</span></span></div>
<div class="abs" style="left:288px;top:28px;width:56px;height:1px;background:#0078d4"></div>
<div class="badge" style="left:78px;top:10px;width:16px;font-size:11px;font-weight:normal">6</div>
<svg style="left:1169.0px;top:11.0px" width="15.5" height="14.0" viewBox="0 0 16 14" fill="none" stroke="#ccc" stroke-width="1.1" ><path d="M2.500 .7h13l-2 12.600H.5z"/><path d="M4 4l3 3-3 3M8 10.200h4" stroke-width="1.100"/></svg>
<div class="abs" style="left:0;top:7px;height:22px;line-height:22px;font-size:11px;color:#ccc"><span class="t" style="left:1188.7px;"><span style="letter-spacing:0.14px">go - 053<span class="u" style="clip-path:inset(0 1.55px 0 0);margin-right:-1.55px">_</span></span><span class="cj">尚硅谷</span><span style="letter-spacing:0.14px"><span class="u" style="clip-path:inset(0 1.55px 0 0);margin-right:-1.55px">_</span></span><span class="cj">指针案例和使用陷阱</span></span></div>
<svg style="left:1380.5px;top:11.0px" width="12.5" height="12.5" viewBox="0 0 12 12" fill="none" stroke="#ccc" stroke-width="1.1" ><path d="M6 0v12M0 6h12"/></svg>
<svg style="left:1398.0px;top:15.0px" width="8.0" height="5.0" viewBox="0 0 8 5" fill="none" stroke="#ccc" stroke-width="1.1" ><path d="M.3.5 4 4.200 7.700.5"/></svg>
<svg style="left:1418.0px;top:10.5px" width="13.5" height="13.0" viewBox="0 0 14 13" fill="none" stroke="#ccc" stroke-width="1.2" ><rect x=".6" y=".6" width="12.800" height="11.800" rx="1"/><path d="M7 1v11"/></svg>
<svg style="left:1442.0px;top:10.5px" width="11.0" height="13.0" viewBox="0 0 11 13" fill="none" stroke="#c5a5c5" stroke-width="1.1" ><path d="M0 2.500h11M3.500 2.500V1h4v1.500M1.500 2.500v9.500h8V2.500M4 5v5M5.500 5v5M7 5v5" /></svg>
<svg style="left:1466.0px;top:16.0px" width="13.0" height="4.0" viewBox="0 0 13 4" fill="#ccc" stroke="none" stroke-width="1.2" ><circle cx="1.500" cy="2" r="1.100"/><circle cx="6.500" cy="2" r="1.100"/><circle cx="11.500" cy="2" r="1.100"/></svg>
<svg style="left:1492.5px;top:14.0px" width="10.0" height="6.0" viewBox="0 0 10 6" fill="none" stroke="#ccc" stroke-width="1.1" ><path d="M.3 5.500 5 .8 9.700 5.500"/></svg>
<svg style="left:1519.0px;top:12.5px" width="9.5" height="9.5" viewBox="0 0 10 10" fill="none" stroke="#ccc" stroke-width="1.2" ><path d="M.5.5l9 9M9.500.5l-9 9"/></svg>
<div class="term">
<div class="tl" style="top:42px">zh\OneDrive - Bosch Group\PersonalDrive\task\golang_study\053_<span class="cj">尚硅谷</span>_<span class="cj">指针案例和使用陷阱</span>&gt;</div>
<div class="tl" style="top:59px">(python_study) PS C:\Users\wxe5szh\OneDrive - Bosch Group\PersonalDrive\task\golang_study\053_<span class="cj">尚硅谷</span>_<span class="cj">指针案例和使用陷阱</span>&gt;</div>
<div class="tl" style="top:76px">(python_study) PS C:\Users\wxe5szh\OneDrive - Bosch Group\PersonalDrive\task\golang_study\053_<span class="cj">尚硅谷</span>_<span class="cj">指针案例和使用陷阱</span>&gt; <span class="y">go</span> run .\exec04.go</div>
<div class="tl" style="top:93px"># command-line-arguments</div>
<div class="tl" style="top:110px">.\exec04.go:9:21: cannot use &amp;a (value of type *int) as *float32 value in variable declaration</div>
<div class="tl" style="top:127px">(python_study) PS C:\Users\wxe5szh\OneDrive - Bosch Group\PersonalDrive\task\golang_study\053_<span class="cj">尚硅谷</span>_<span class="cj">指针案例和使用陷阱</span>&gt; <span class="y">go</span> run .\exec04.go</div>
<div class="tl" style="top:144px">0xc000096068</div>
<div class="tl" style="top:161px">(python_study) PS C:\Users\wxe5szh\OneDrive - Bosch Group\PersonalDrive\task\golang_study\053_<span class="cj">尚硅谷</span>_<span class="cj">指针案例和使用陷阱</span>&gt; <span style="display:inline-block;width:7px;height:14px;border:1px solid #ccc;vertical-align:-3px"></span></div>
</div>
<div class="abs" style="left:6.700px;top:61.7px;width:9px;height:9px;border-radius:5px;border:2px solid #6a6a6a"></div>
<svg style="left:6.8px;top:79.2px" width="8.6" height="8.6" viewBox="0 0 8 8" fill="none" stroke="#e05252" stroke-width="1" ><circle cx="4" cy="4" r="3.400"/><path d="M2.300 2.300l3.400 3.400M5.700 2.300 2.300 5.700"/></svg>
<div class="abs" style="left:6.900px;top:130.0px;width:8.400px;height:8.400px;border-radius:5px;background:#2b90b8"></div>
<div class="abs" style="left:6.700px;top:163.6px;width:9px;height:9px;border-radius:5px;border:2px solid #6a6a6a"></div>
<div class="abs" style="left:1532px;top:41px;width:1px;height:375px;background:#0e0e0e"></div>
<div class="abs" style="left:1532px;top:41px;width:14px;height:1px;background:#0e0e0e"></div>
<div class="abs" style="left:1541.5px;top:41px;width:4px;height:6px;background:#e5484d"></div>
<div class="abs" style="left:1533.5px;top:71px;width:4px;height:12px;background:#1b8bbd"></div>
<div class="abs" style="left:1533.5px;top:155px;width:4px;height:12px;background:#5a5a5a"></div>
<div class="abs" style="left:1541.5px;top:167px;width:4px;height:12px;background:#e5484d"></div>
<div class="abs" style="left:1533.5px;top:203px;width:4px;height:12px;background:#1b8bbd"></div>
<div class="abs" style="left:1533.5px;top:228px;width:4px;height:12px;background:#5a5a5a"></div>
</div>
<div id="status"><div id="remote"></div>
<svg style="left:0.0px;top:0.0px" width="34.0" height="21.0" viewBox="0 0 34 21" fill="none" stroke="#fff" stroke-width="1.2" ><path d="M12.600 8.800l4.700 3.700-4.700 3.800M21.800 5l-4.700 3.800 4.700 3.700"/></svg>
<svg style="left:41.0px;top:4.0px" width="12.0" height="14.0" viewBox="0 0 12 14" fill="none" stroke="#ccc" stroke-width="1.1" ><circle cx="3" cy="2.500" r="1.700"/><circle cx="3" cy="11.500" r="1.700"/><circle cx="9.500" cy="4.500" r="1.700"/><path d="M3 4.200v5.600M9.500 6.200c0 2.500-6.500 1.300-6.500 3.600"/></svg>
<span class="t" style="left:57.5px;"><span style="letter-spacing:-0.12px">master*</span></span>
<svg style="left:104.5px;top:5.0px" width="14.5" height="12.0" viewBox="0 0 14.5 12" fill="none" stroke="#ccc" stroke-width="1.1" ><path d="M2 5.800A5.300 4.800 0 0 1 12 3.600M12.500 6.200A5.300 4.800 0 0 1 2.500 8.400M9.300 4h3.200V1M5.200 8H2v3"/></svg>
<svg style="left:133.0px;top:4.5px" width="13.0" height="13.0" viewBox="0 0 13 13" fill="none" stroke="#ccc" stroke-width="1.1" ><circle cx="6.500" cy="6.500" r="5.800"/><path d="M4.200 4.200l4.600 4.600M8.800 4.200 4.200 8.800"/></svg>
<span class="t" style="left:149.5px;"><span style="letter-spacing:0.33px">6</span></span>
<svg style="left:160.5px;top:4.5px" width="13.0" height="12.0" viewBox="0 0 13 12" fill="none" stroke="#ccc" stroke-width="1.1" ><path d="M6.500 2.800 12.200 11.200H.8zM6.500 5.600v2.800M6.500 9.300v1"/></svg>
<span class="t" style="left:176.5px;"><span style="letter-spacing:0.33px">0</span></span>
<span class="t" style="left:1472.3px;"><span style="letter-spacing:-0.23px">Ln 9, Col 69</span></span>
<span class="t" style="left:1550.0px;"><span style="letter-spacing:-0.37px">Tab Size: 4</span></span>
<span class="t" style="left:1620.5px;"><span style="letter-spacing:-0.34px">UTF-8</span></span>
<span class="t" style="left:1667.4px;"><span style="letter-spacing:-0.98px">CRLF</span></span>
<span class="t" style="left:1709.5px;"><span style="letter-spacing:2.14px">{}</span></span>
<span class="t" style="left:1728.0px;">Go</span>
<span class="t" style="left:1757.5px;"><span style="letter-spacing:-0.43px">1.21.1</span></span>
<span class="t" style="left:1835.3px;"><span style="letter-spacing:-0.12px">Go Live</span></span>
<svg style="left:1791.5px;top:3.5px" width="9.0" height="13.0" viewBox="0 0 9 13" fill="none" stroke="#ccc" stroke-width="0.9" ><path d="M5.800.6 1.300 7.200h3L2.800 12.400 7.800 5.200H4.700z"/></svg>
<svg style="left:1819.5px;top:3.8px" width="13.0" height="13.0" viewBox="0 0 13 13" fill="none" stroke="#ccc" stroke-width="1.1" ><circle cx="6.500" cy="5.500" r="1.800"/><path d="M3.200 8.800a4.600 4.600 0 1 1 6.600 0M6.500 7.500v5"/></svg>
<svg style="left:1892.0px;top:3.0px" width="12.0" height="13.0" viewBox="0 0 12 13" fill="none" stroke="#ccc" stroke-width="1.1" ><path d="M1 10h10c-1-1-1.500-2-1.500-4.500C9.500 3 8 1.200 6 1.200S2.500 3 2.500 5.500C2.500 8 2 9 1 10zM4.800 11.500a1.200 1.200 0 0 0 2.400 0"/></svg>
<div class="abs" style="left:1906px;top:0;width:1px;height:21px;background:#0e0e0e"></div>
</div>
<svg style="left:0;top:0" width="1920" height="1032" viewBox="0 0 1920 1032" fill="none" stroke-width="2.200"><rect x="372.500" y="243.550" width="882.100" height="37.850" rx="5.500" stroke="#ff0000"/><rect x="372.500" y="300.500" width="882.100" height="56.800" rx="5.500" stroke="#fcb912"/><rect x="372.600" y="669.700" width="1008.100" height="50.100" rx="5.500" stroke="#ff0000"/><rect x="372.600" y="720.500" width="1008.100" height="36.100" rx="5.500" stroke="#fcb912"/></svg>
</body></html>
